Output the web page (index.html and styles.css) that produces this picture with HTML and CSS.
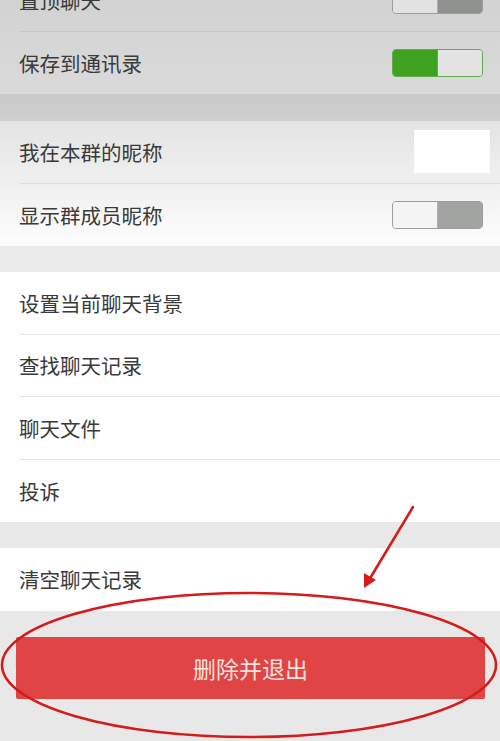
FILE: index.html
```html
<!DOCTYPE html>
<html lang="zh">
<head>
<meta charset="utf-8">
<link rel="stylesheet" href="styles.css">
</head>
<body>
<div class="screen">
  <div class="page">
    <section class="group g1">
      <div class="row"><span class="label">置顶聊天</span><span class="toggle off dark"><i></i><b></b></span></div>
      <div class="row"><span class="label">保存到通讯录</span><span class="toggle on"><i></i><b></b></span></div>
    </section>
    <div class="band b1"></div>
    <section class="group g2">
      <div class="row"><span class="label">我在本群的昵称</span><span class="nick"></span></div>
      <div class="row"><span class="label">显示群成员昵称</span><span class="toggle off"><i></i><b></b></span></div>
    </section>
    <div class="band b2"></div>
    <section class="group g3">
      <div class="row"><span class="label">设置当前聊天背景</span></div>
      <div class="row"><span class="label">查找聊天记录</span></div>
      <div class="row"><span class="label">聊天文件</span></div>
      <div class="row"><span class="label">投诉</span></div>
    </section>
    <div class="band b3"></div>
    <section class="group g3">
      <div class="row"><span class="label">清空聊天记录</span></div>
    </section>
    <div class="footer">
      <button class="danger">删除并退出</button>
    </div>
  </div>
  <svg class="annot" width="500" height="741" viewBox="0 0 500 741">
    <ellipse cx="249" cy="665" rx="247" ry="72" fill="none" stroke="#d41c1c" stroke-width="2.6"/>
    <line x1="413" y1="507" x2="369" y2="580" stroke="#d41c1c" stroke-width="2.6" stroke-linecap="round"/>
    <polygon points="364,588 364,573 376,580" fill="#d41c1c"/>
  </svg>
</div>
</body>
</html>
```

FILE: styles.css
```css
html, body {
  margin: 0;
  padding: 0;
}
body {
  background: #e8e8e8;
  font-family: "Noto Sans CJK SC", "Noto Sans", sans-serif;
  width: 500px;
  height: 741px;
  overflow: hidden;
}
.screen {
  position: relative;
  width: 500px;
  height: 741px;
  overflow: hidden;
}
.page {
  margin-top: -31px;
  display: flex;
  flex-direction: column;
}
.group {
  display: flex;
  flex-direction: column;
}
.g1 {
  background: linear-gradient(#cfcfcf, #d6d6d6 60%, #dadada);
}
.g2 {
  background: linear-gradient(#e3e3e3, #f0f0f0 50%, #fdfdfd);
}
.g3 {
  background: #ffffff;
}
.row {
  box-sizing: border-box;
  height: 62.5px;
  margin-left: 19px;
  padding-right: 17px;
  display: flex;
  align-items: center;
  justify-content: space-between;
  border-bottom: 1px solid #e2e2e2;
}
.g1 .row { border-bottom-color: #c8c8c8; }
.g2 .row { border-bottom-color: #dedede; }
.row:last-child {
  border-bottom: none;
}
.label {
  font-size: 20.5px;
  color: #3a3a3a;
  letter-spacing: 0;
}
.band {
  height: 26px;
}
.b1 { height: 27px; background: linear-gradient(#c9c9c9, #cfcfcf); }
.b2 { background: #eaeaea; }
.b3 { background: #e8e8e8; }
.toggle {
  box-sizing: border-box;
  width: 91px;
  height: 28px;
  border-radius: 4px;
  display: flex;
  overflow: hidden;
  border: 1px solid #9c9c9c;
}
.toggle i, .toggle b {
  flex: 1;
  display: block;
}
.toggle.on {
  border-color: #62a84c;
}
.toggle.on i { background: #3ca21f; }
.toggle.on b { background: #e3e3e3; border-left: 1px solid #62a84c; }
.toggle.off i { background: #f4f4f4; border-right: 1px solid #b0b0b0; }
.toggle.off b { background: #a2a4a1; }
.toggle.off.dark i { background: #e2e2e2; }
.toggle.off.dark b { background: #8f918f; }
.nick {
  width: 76px;
  height: 43px;
  background: #ffffff;
  margin-right: -7px;
}
.footer {
  padding: 26.5px 15px 0 16px;
}
.danger {
  width: 100%;
  height: 62px;
  border: none;
  border-radius: 2px;
  background: #e14444;
  color: #fbe3df;
  font-family: "Noto Sans CJK SC", "Noto Sans", sans-serif;
  font-size: 23px;
  padding: 0;
}
.annot {
  position: absolute;
  left: 0;
  top: 0;
  pointer-events: none;
}
```
